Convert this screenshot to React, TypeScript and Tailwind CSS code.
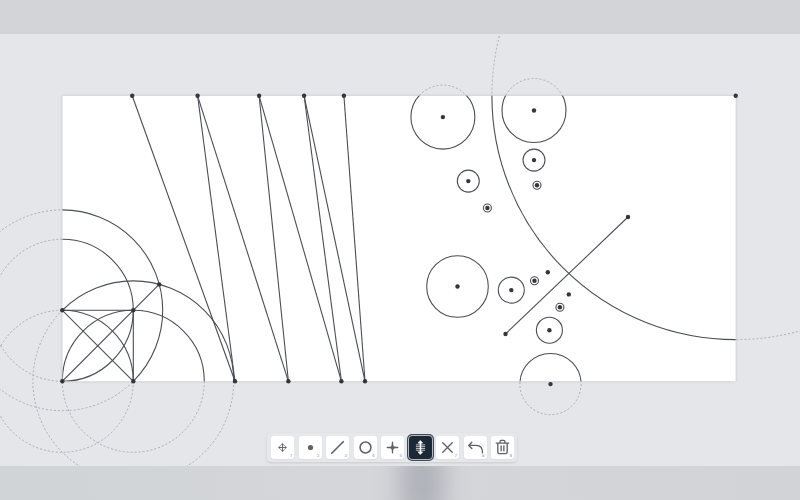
import type { ReactNode } from 'react'
import clsx from 'clsx'

interface Point {
  x: number
  y: number
}

interface Circle extends Point {
  r: number
}

interface Line {
  from: Point
  to: Point
}

interface Tool {
  id: string
  label: string
  icon: ReactNode
}

const pt = (x: number, y: number): Point => ({ x, y })

// all coordinates are in canvas units, the sheet is the printable area
const SHEET = { x: 62.4, y: 61.8, width: 673.3, height: 285.5 }

// construction in the lower left corner
const CORNER: Point[] = [pt(62.3, 347.3), pt(133.3, 347.3), pt(62.3, 276.3), pt(133.3, 276.3), pt(159.2, 250.4)]

const TOP: Point[] = [pt(132.2, 61.8), pt(197.6, 61.8), pt(259.1, 61.8), pt(304.1, 61.8), pt(343.9, 61.8)]
const BOTTOM: Point[] = [pt(235, 347.3), pt(288.4, 347.3), pt(341.4, 347.3), pt(365, 347.3)]

const LINES: Line[] = [
  { from: CORNER[0], to: CORNER[4] },
  { from: CORNER[2], to: CORNER[1] },
  { from: CORNER[2], to: CORNER[3] },
  { from: CORNER[3], to: CORNER[1] },
  ...BOTTOM.flatMap((to, i) => [
    { from: TOP[i], to },
    { from: TOP[i + 1], to },
  ]),
  { from: pt(505.5, 300), to: pt(628, 183) },
]

const CORNER_CIRCLES: Circle[] = [
  { ...CORNER[0], r: 71 },
  { ...CORNER[1], r: 71 },
  { ...CORNER[2], r: 71 },
  { ...CORNER[2], r: 100.4 },
  { ...CORNER[1], r: 100.4 },
]

const CIRCLES: Circle[] = [
  { x: 442.9, y: 83.1, r: 32 },
  { x: 534, y: 76.5, r: 32 },
  { x: 534, y: 126.1, r: 11 },
  { x: 537, y: 151.3, r: 4 },
  { x: 468.3, y: 147.1, r: 11 },
  { x: 487.4, y: 174, r: 4 },
  { x: 457.5, y: 252.5, r: 30.8 },
  { x: 511.3, y: 256.1, r: 13 },
  { x: 534.5, y: 246.7, r: 4 },
  { x: 559.9, y: 273.2, r: 4 },
  { x: 549.4, y: 296.2, r: 13 },
  { x: 550.5, y: 350.1, r: 30.6 },
  { x: 735.7, y: 61.8, r: 243.8 },
]

const POINTS: Point[] = [
  ...CORNER,
  ...TOP,
  ...BOTTOM,
  ...CIRCLES,
  pt(505.5, 300),
  pt(628, 183),
  pt(547.8, 238.3),
  pt(568.8, 260.4),
]

const Shapes = () => (
  <>
    {[...CORNER_CIRCLES, ...CIRCLES].map((c, i) => (
      <circle key={i} cx={c.x} cy={c.y} r={c.r} />
    ))}
    {LINES.map(({ from, to }, i) => (
      <line key={i} x1={from.x} y1={from.y} x2={to.x} y2={to.y} />
    ))}
  </>
)

const Canvas = () => (
  <svg viewBox="0 0 800 432" className="h-full w-full" role="img" aria-label="Drawing">
    <defs>
      <clipPath id="sheet">
        <rect {...SHEET} />
      </clipPath>
      <clipPath id="view">
        <rect x="0" y="2" width="800" height="430" />
      </clipPath>
    </defs>
    <g fill="none" stroke="#a3a6ab" strokeDasharray="2 2" strokeWidth="0.9" clipPath="url(#view)">
      <Shapes />
    </g>
    <rect {...SHEET} fill="#fff" className="drop-shadow-[0_0_1px_rgb(0_0_0/0.22)]" />
    <g fill="none" stroke="#4b4e55" strokeWidth="1.1" clipPath="url(#sheet)">
      <Shapes />
    </g>
    {POINTS.map((p, i) => (
      <circle key={i} cx={p.x} cy={p.y} r="2.2" fill="#34353f" />
    ))}
  </svg>
)

const TOOLS: Tool[] = [
  {
    id: 'move',
    label: 'Move',
    icon: (
      <>
        <path d="M11 7.5v7M7.500 11h7" strokeWidth="0.9" />
        <path d="M9.7 8.8L11 7.4l1.300 1.400M9.700 13.200l1.300 1.400 1.300-1.400M8.800 9.700L7.400 11l1.400 1.300M13.200 9.700l1.400 1.300-1.400 1.300" strokeWidth="0.9" />
      </>
    ),
  },
  { id: 'point', label: 'Point', icon: <circle cx="11" cy="11" r="2.5" fill="currentColor" stroke="none" /> },
  { id: 'line', label: 'Line', icon: <path d="M5.5 16.5l11-11" strokeWidth="1.6" /> },
  { id: 'circle', label: 'Circle', icon: <circle cx="11" cy="11" r="5.2" /> },
  {
    id: 'intersect',
    label: 'Intersection',
    icon: (
      <>
        <path d="M11 6v10M6 11h10" strokeWidth="1.3" />
        <path d="M11 8.4l.9 1.700 1.700.9-1.700.9-.9 1.700-.9-1.700-1.700-.9 1.700-.9z" fill="currentColor" strokeWidth="0.8" />
      </>
    ),
  },
  {
    id: 'measure',
    label: 'Measure',
    icon: (
      <>
        <path d="M11 6v10" strokeWidth="1.4" />
        <path d="M11 4.500l2 2.300H9zM11 17.500l2-2.300H9z" fill="currentColor" strokeWidth="0.7" />
        <path d="M7 8.500h8M7 10.200h8M7 11.900h8M7 13.600h8" strokeWidth="0.7" />
      </>
    ),
  },
  { id: 'delete', label: 'Delete', icon: <path d="M6.5 6.5l9 9M15.500 6.500l-9 9" strokeWidth="1.3" /> },
  {
    id: 'undo',
    label: 'Undo',
    icon: <path d="M7.5 6L4.500 9l3 3M4.700 9h7c4 0 6 2.500 6 7" strokeWidth="1.3" />,
  },
  {
    id: 'clear',
    label: 'Clear',
    icon: (
      <>
        <path d="M5 6.8h12M6.500 7v8.300c0 1 .5 1.500 1.500 1.500h6c1 0 1.500-.5 1.500-1.500V7M8.700 6.500V5.200c0-.6.4-1 1-1h2.600c.6 0 1 .4 1 1v1.300" strokeWidth="1.3" />
        <path d="M9.700 9.500v4.600M12.300 9.500v4.600" strokeWidth="1.3" />
      </>
    ),
  },
]

const ToolButton = ({ tool, index, active }: { tool: Tool; index: number; active: boolean }) => (
  <button
    type="button"
    aria-label={tool.label}
    aria-pressed={active}
    className={clsx(
      'relative flex size-[23px] items-center justify-center rounded-[3px] shadow-xs',
      active
        ? 'bg-[#1c2836] text-white outline-1 outline-[#b4bac2] ring-2 ring-[#3f4a58]'
        : 'bg-white text-[#606266]',
    )}
  >
    <svg viewBox="0 0 22 22" className="size-full" fill="none" stroke="currentColor" strokeWidth="1.5" strokeLinecap="round" strokeLinejoin="round">
      {tool.icon}
    </svg>
    {!active && <span className="absolute right-0.5 bottom-px text-[4px] leading-none text-[#8b8d92]">{index + 1}</span>}
  </button>
)

export default function App() {
  return (
    <div className="flex h-screen flex-col bg-[#d2d4d8] font-['Inter',sans-serif]">
      <header className="h-[34px] shrink-0" />
      <main className="relative min-h-0 flex-1 overflow-hidden bg-[#e4e6ea]">
        <Canvas />
        <div className="absolute inset-x-0 bottom-1 flex justify-center pr-4">
          <div role="toolbar" aria-label="Tools" className="flex w-[250px] items-center justify-between rounded-[4px] bg-[#e6e8eb] py-[3px] pr-[3px] pl-1 shadow-sm">
            {TOOLS.map((tool, i) => (
              <ToolButton key={tool.id} tool={tool} index={i} active={tool.id === 'measure'} />
            ))}
          </div>
        </div>
      </main>
      <footer className="flex h-[34px] shrink-0 justify-center overflow-hidden bg-linear-to-r from-[#d0d4d7] via-[#d5d6d9] to-[#d1d3d7] pl-11">
        <div className="-my-4 w-11 bg-[#a6a9b1] opacity-80 blur-[12px]" />
      </footer>
    </div>
  )
}
